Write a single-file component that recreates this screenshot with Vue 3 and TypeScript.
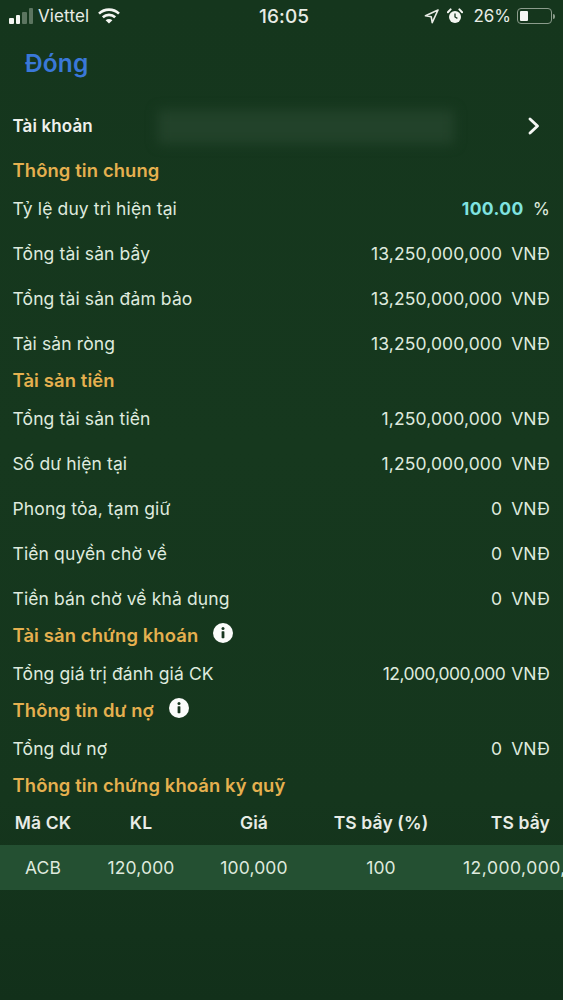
<script setup lang="ts">
interface Row { label: string; value: string; unit: string; narrow?: boolean }
interface Section { title: string; info?: boolean; rows: Row[] }

const sections: Section[] = [
  { title: 'Thông tin chung', rows: [
    { label: 'Tỷ lệ duy trì hiện tại', value: '100.00', unit: '%' },
    { label: 'Tổng tài sản bẩy', value: '13,250,000,000', unit: 'VNĐ' },
    { label: 'Tổng tài sản đảm bảo', value: '13,250,000,000', unit: 'VNĐ' },
    { label: 'Tài sản ròng', value: '13,250,000,000', unit: 'VNĐ' },
  ] },
  { title: 'Tài sản tiền', rows: [
    { label: 'Tổng tài sản tiền', value: '1,250,000,000', unit: 'VNĐ' },
    { label: 'Số dư hiện tại', value: '1,250,000,000', unit: 'VNĐ' },
    { label: 'Phong tỏa, tạm giữ', value: '0', unit: 'VNĐ' },
    { label: 'Tiền quyền chờ về', value: '0', unit: 'VNĐ' },
    { label: 'Tiền bán chờ về khả dụng', value: '0', unit: 'VNĐ' },
  ] },
  { title: 'Tài sản chứng khoán', info: true, rows: [
    { label: 'Tổng giá trị đánh giá CK', value: '12,000,000,000', unit: 'VNĐ', narrow: true },
  ] },
  { title: 'Thông tin dư nợ', info: true, rows: [
    { label: 'Tổng dư nợ', value: '0', unit: 'VNĐ' },
  ] },
]
</script>

<template>
  <div class="screen">
    <div class="status">
      <div class="status-left">
        <div class="signal">
          <i class="on h1"></i><i class="on h2"></i><i class="h3"></i><i class="h4"></i>
        </div>
        <span class="carrier">Viettel</span>
        <svg class="wifi" viewBox="0 0 22 16" width="22" height="16">
          <path d="M1 5.6C6.6.3 15.4.3 21 5.6" fill="none" stroke="#f4f6f2" stroke-width="2.6"/>
          <path d="M4.8 9.3c3.5-3.2 8.9-3.2 12.4 0" fill="none" stroke="#f4f6f2" stroke-width="2.6"/>
          <path d="M11 15.6 7.6 12.2c1.9-1.7 4.9-1.7 6.8 0z" fill="#f4f6f2"/>
        </svg>
      </div>
      <span class="clock">16:05</span>
      <div class="status-right">
        <svg class="loc" viewBox="0 0 15 15" width="15" height="15">
          <path d="M14 1 1.5 6.8l5.7.9 1 5.9z" fill="none" stroke="#e8ece6" stroke-width="1.6" stroke-linejoin="round"/>
        </svg>
        <svg class="alarm" viewBox="0 0 16 16" width="16" height="16">
          <circle cx="8" cy="9" r="6" fill="#f4f6f2"/>
          <path d="M8 5.5V9l2.4 1.4" fill="none" stroke="#17351f" stroke-width="1.3"/>
          <path d="M.9 4.2 3.6 1.4M15.1 4.2 12.4 1.4" stroke="#f4f6f2" stroke-width="2" stroke-linecap="round"/>
        </svg>
        <span class="pct">26%</span>
        <div class="battery"><i class="level"></i></div>
        <i class="nub"></i>
      </div>
    </div>

    <div class="nav"><span class="close">Đóng</span></div>

    <div class="account">
      <span class="account-label">Tài khoản</span>
      <div class="mask"></div>
      <svg class="chevron" viewBox="0 0 14 20" width="14" height="20">
        <path d="M3 3l7.5 7L3 17" fill="none" stroke="#f5f7f4" stroke-width="2.9" stroke-linecap="round" stroke-linejoin="round"/>
      </svg>
    </div>

    <section v-for="s in sections" :key="s.title">
      <div class="section-title">
        <span>{{ s.title }}</span>
        <svg v-if="s.info" class="info" viewBox="0 0 20 20" width="20" height="20">
          <circle cx="10" cy="10" r="10" fill="#fbfcfb"/>
          <circle cx="10" cy="5.6" r="1.5" fill="#17351f"/>
          <rect x="8.6" y="8.2" width="2.8" height="7" rx=".6" fill="#17351f"/>
        </svg>
      </div>
      <div v-for="r in s.rows" :key="r.label" class="row">
        <span>{{ r.label }}</span>
        <span class="right">
          <span :class="{ cyan: r.unit === '%', narrow: r.narrow }">{{ r.value }}</span>
          <span class="unit">{{ r.unit }}</span>
        </span>
      </div>
    </section>

    <div class="section-title">Thông tin chứng khoán ký quỹ</div>
    <div class="table-row head">
      <span>Mã CK</span><span>KL</span><span>Giá</span><span>TS bẩy (%)</span><span class="last">TS bẩy</span>
    </div>
    <div class="table-row data">
      <span>ACB</span><span>120,000</span><span>100,000</span><span>100</span><span class="last">12,000,000,000</span>
    </div>
  </div>
</template>

<style>
html, body { margin: 0; background: #12291b; }
</style>

<style scoped>
.screen {
  width: 563px;
  height: 1000px;
  overflow: hidden;
  box-sizing: border-box;
  background: linear-gradient(180deg, #15361d 0%, #16381e 45%, #15361d 80%, #12301a 100%);
  color: #dfeade;
  font-family: Inter, "Noto Sans", sans-serif;
  font-size: 17.5px;
  letter-spacing: 0.12px;
}
.status {
  height: 32px;
  position: relative;
  display: flex;
  align-items: center;
  justify-content: space-between;
  padding: 0 8px 0 9px;
  font-size: 17px;
  color: #e8ece6;
}
.status-left, .status-right { display: flex; align-items: center; }
.signal { display: flex; align-items: flex-end; gap: 2px; height: 16px; }
.signal i { width: 4.5px; background: #5c7560; border-radius: 1px; }
.signal .on { background: #f4f6f2; }
.h1 { height: 6px; }
.h2 { height: 9px; }
.h3 { height: 12px; }
.h4 { height: 16px; }
.carrier { margin-left: 5px; }
.wifi { margin-left: 9px; }
.clock {
  position: absolute;
  left: 259px;
  font-size: 19px;
  font-weight: 500;
}
.loc { margin-right: 8px; }
.alarm { margin-right: 10px; }
.pct { letter-spacing: 0; }
.battery {
  width: 35px;
  height: 16px;
  margin-left: 6px;
  box-sizing: border-box;
  border: 1px solid #8b9c8c;
  border-radius: 4px;
  padding: 2px;
}
.level { display: block; width: 8px; height: 100%; background: #f5f7f4; border-radius: 1px; }
.nub { width: 2px; height: 5px; margin-left: 1px; background: #8b9c8c; border-radius: 0 2px 2px 0; }
.nav { height: 64px; display: flex; align-items: center; padding: 0 0 2px 25px; box-sizing: border-box; }
.close { color: #3a78d8; font-size: 24.5px; font-weight: 600; }
.account {
  height: 60px;
  position: relative;
  display: flex;
  align-items: center;
  justify-content: space-between;
  padding: 0 22px 0 12.5px;
}
.account-label { font-size: 17px; font-weight: 600; color: #eef1ec; }
.mask {
  position: absolute;
  left: 158px;
  top: 14px;
  width: 296px;
  height: 34px;
  background: #22422a;
  filter: blur(6px);
}
.chevron { position: relative; }
.section-title {
  height: 30px;
  box-sizing: border-box;
  padding: 0 0 2px 12.5px;
  display: flex;
  align-items: center;
  gap: 15px;
  color: #e5b04f;
  font-size: 18.4px;
  font-weight: 600;
}
.info { margin-top: -4px; }
.row {
  height: 45px;
  display: flex;
  align-items: center;
  justify-content: space-between;
  padding: 0 13px 0 12.5px;
}
.right { display: flex; gap: 9px; }
.cyan { color: #7fe3e0; font-weight: 700; letter-spacing: 0.4px; }
.narrow { letter-spacing: -0.55px; margin-right: -3px; }
.table-row {
  display: grid;
  grid-template-columns: 86px 110px 116px 138px 1fr;
  align-items: center;
  text-align: center;
  white-space: nowrap;
  overflow: hidden;
}
.head { height: 44px; font-weight: 600; color: #e8ece6; padding-bottom: 2px; box-sizing: border-box; }
.data { height: 45px; background: #245032; }
.head .last { text-align: right; padding-right: 13px; }
.data .last { text-align: left; padding-left: 13px; letter-spacing: 0.5px; }
</style>
